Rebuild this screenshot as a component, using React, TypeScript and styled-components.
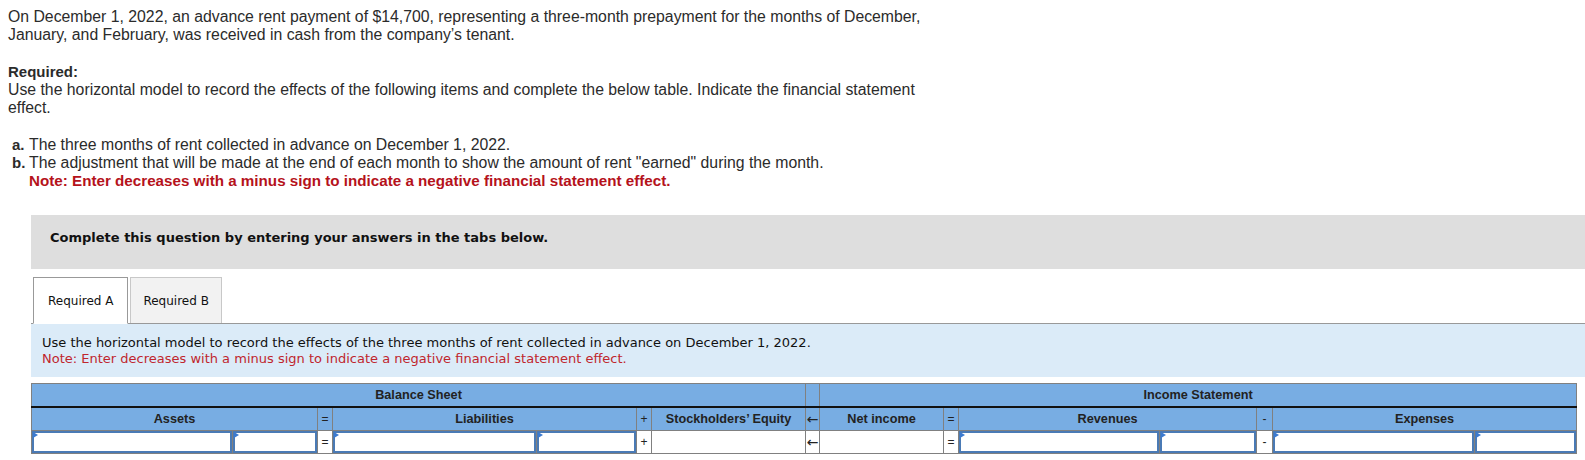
import React from 'react'
import styled, { createGlobalStyle } from 'styled-components'

const GlobalStyle = createGlobalStyle`
  html, body {
    margin: 0;
    padding: 0;
    background: #fff;
    overflow-x: hidden;
  }
  body {
    padding: 8px;
    font-family: 'Liberation Sans', Arial, sans-serif;
    color: #2b2b2b;
  }
`

const Intro = styled.div`
  max-width: 940px;
  font-size: 15.8px;
  line-height: 18px;
`

const Para = styled.p`
  margin: 0 0 19px 0;
`

const Strong = styled.span`
  font-weight: 700;
  font-size: 15px;
`

const ItemList = styled.div`
  display: flex;
  flex-direction: column;
  padding-left: 4px;
`

const Item = styled.div`
  display: flex;
`

const ItemLabel = styled.span`
  font-weight: 700;
  font-size: 15px;
  width: 17px;
  flex-shrink: 0;
`

const Warn = styled.div<{ $bold?: boolean }>`
  color: ${p => (p.$bold ? '#b5121b' : '#c0262d')};
  font-weight: ${p => (p.$bold ? 700 : 400)};
  font-size: ${p => (p.$bold ? '15.2px' : 'inherit')};
`

const Question = styled.section`
  margin: 25px -8px 0 23px;
  font-family: 'DejaVu Sans', Verdana, sans-serif;
`

const Banner = styled.div`
  background: #dedede;
  height: 54px;
  box-sizing: border-box;
  padding: 15px 0 0 19px;
  line-height: 16px;
  font-size: 13px;
  font-weight: 700;
  color: #111;
`

const TabBar = styled.div`
  margin-top: 8px;
  display: flex;
  gap: 2px;
  padding-left: 2px;
  border-bottom: 1px solid #999;
  height: 46px;
`

const Tab = styled.div<{ $active?: boolean }>`
  box-sizing: border-box;
  padding: 0 ${p => (p.$active ? 14 : 12)}px;
  display: flex;
  align-items: center;
  font-size: 12px;
  color: #111;
  background: ${p => (p.$active ? '#fff' : '#f2f2f2')};
  border: 1px solid ${p => (p.$active ? '#999' : '#c8c8c8')};
  border-bottom: ${p => (p.$active ? '1px solid #fff' : 'none')};
  height: ${p => (p.$active ? '47px' : '46px')};
`

const NotePanel = styled.div`
  background: #dbebf8;
  height: 53px;
  box-sizing: border-box;
  padding: 11px 11px 0;
  font-size: 13px;
  line-height: 16px;
  color: #111;
`

const Ledger = styled.table`
  margin-top: 6px;
  border-collapse: collapse;
  table-layout: fixed;
  width: 1545px;
  font-family: 'Liberation Sans', Arial, sans-serif;
  border: 1px solid #808080;
`

const HeadCell = styled.th<{ $rule?: boolean; $sign?: boolean }>`
  background: #78ade3;
  color: #222;
  font-size: ${p => (p.$sign ? '12px' : '12.7px')};
  font-weight: ${p => (p.$sign ? 400 : 700)};
  height: 22px;
  padding: 0;
  text-align: center;
  white-space: nowrap;
  overflow: visible;
  border: 1px solid #808080;
  border-bottom: ${p => (p.$rule ? '2px solid #111' : '1px solid #808080')};
`

const SignCell = styled.td`
  background: #fff;
  height: 22px;
  padding: 0;
  text-align: center;
  font-size: 12px;
  color: #222;
  white-space: nowrap;
  border: 1px solid #808080;
`

const Arrow = styled.span`
  font-family: 'DejaVu Sans', sans-serif;
  font-size: 14px;
  font-weight: 400;
`

const InputCell = styled.td`
  padding: 0;
  height: 22px;
  border: 1px solid #808080;
  background: #fff;
`

const Field = styled.div`
  position: relative;
  height: 22px;
  box-sizing: border-box;
  border: 2px solid #4a7ab5;
  background: #fff;

  &::before {
    content: '';
    position: absolute;
    left: -1px;
    top: -1px;
    border-top: 3px solid transparent;
    border-bottom: 3px solid transparent;
    border-left: 5px solid #3b7ad0;
  }
`

const FieldInput = styled.input`
  width: 100%;
  height: 100%;
  border: none;
  outline: none;
  padding: 0 4px;
  box-sizing: border-box;
  background: transparent;
  font: inherit;
`

const COLS = [201, 85, 15, 204, 100, 15, 154, 14, 124, 15, 201, 97, 16, 202, 102]

const Entry = () => (
  <InputCell>
    <Field>
      <FieldInput type="text" />
    </Field>
  </InputCell>
)

export default function App() {
  return (
    <>
      <GlobalStyle />
      <Intro>
        <Para>
          On December 1, 2022, an advance rent payment of $14,700, representing a three-month prepayment for the
          months of December, January, and February, was received in cash from the company’s tenant.
        </Para>
        <Para>
          <Strong>Required:</Strong>
          <br />
          Use the horizontal model to record the effects of the following items and complete the below table. Indicate
          the financial statement effect.
        </Para>
        <ItemList>
          <Item>
            <ItemLabel>a.</ItemLabel>
            <span>The three months of rent collected in advance on December 1, 2022.</span>
          </Item>
          <Item>
            <ItemLabel>b.</ItemLabel>
            <div>
              The adjustment that will be made at the end of each month to show the amount of rent "earned" during the
              month.
              <Warn $bold>Note: Enter decreases with a minus sign to indicate a negative financial statement effect.</Warn>
            </div>
          </Item>
        </ItemList>
      </Intro>

      <Question>
        <Banner>Complete this question by entering your answers in the tabs below.</Banner>
        <TabBar>
          <Tab $active>Required A</Tab>
          <Tab>Required B</Tab>
        </TabBar>
        <NotePanel>
          Use the horizontal model to record the effects of the three months of rent collected in advance on December 1,
          2022.
          <Warn>Note: Enter decreases with a minus sign to indicate a negative financial statement effect.</Warn>
        </NotePanel>

        <Ledger>
          <colgroup>
            {COLS.map((w, i) => (
              <col key={i} style={{ width: w }} />
            ))}
          </colgroup>
          <tbody>
            <tr>
              <HeadCell colSpan={7} $rule>
                Balance Sheet
              </HeadCell>
              <HeadCell $rule />
              <HeadCell colSpan={7} $rule>
                Income Statement
              </HeadCell>
            </tr>
            <tr>
              <HeadCell colSpan={2}>Assets</HeadCell>
              <HeadCell $sign>=</HeadCell>
              <HeadCell colSpan={2}>Liabilities</HeadCell>
              <HeadCell $sign>+</HeadCell>
              <HeadCell>Stockholders’ Equity</HeadCell>
              <HeadCell $sign>
                <Arrow>←</Arrow>
              </HeadCell>
              <HeadCell>Net income</HeadCell>
              <HeadCell $sign>=</HeadCell>
              <HeadCell colSpan={2}>Revenues</HeadCell>
              <HeadCell $sign>-</HeadCell>
              <HeadCell colSpan={2}>Expenses</HeadCell>
            </tr>
            <tr>
              <Entry />
              <Entry />
              <SignCell>=</SignCell>
              <Entry />
              <Entry />
              <SignCell>+</SignCell>
              <SignCell />
              <SignCell>
                <Arrow>←</Arrow>
              </SignCell>
              <SignCell />
              <SignCell>=</SignCell>
              <Entry />
              <Entry />
              <SignCell>-</SignCell>
              <Entry />
              <Entry />
            </tr>
          </tbody>
        </Ledger>
      </Question>
    </>
  )
}
